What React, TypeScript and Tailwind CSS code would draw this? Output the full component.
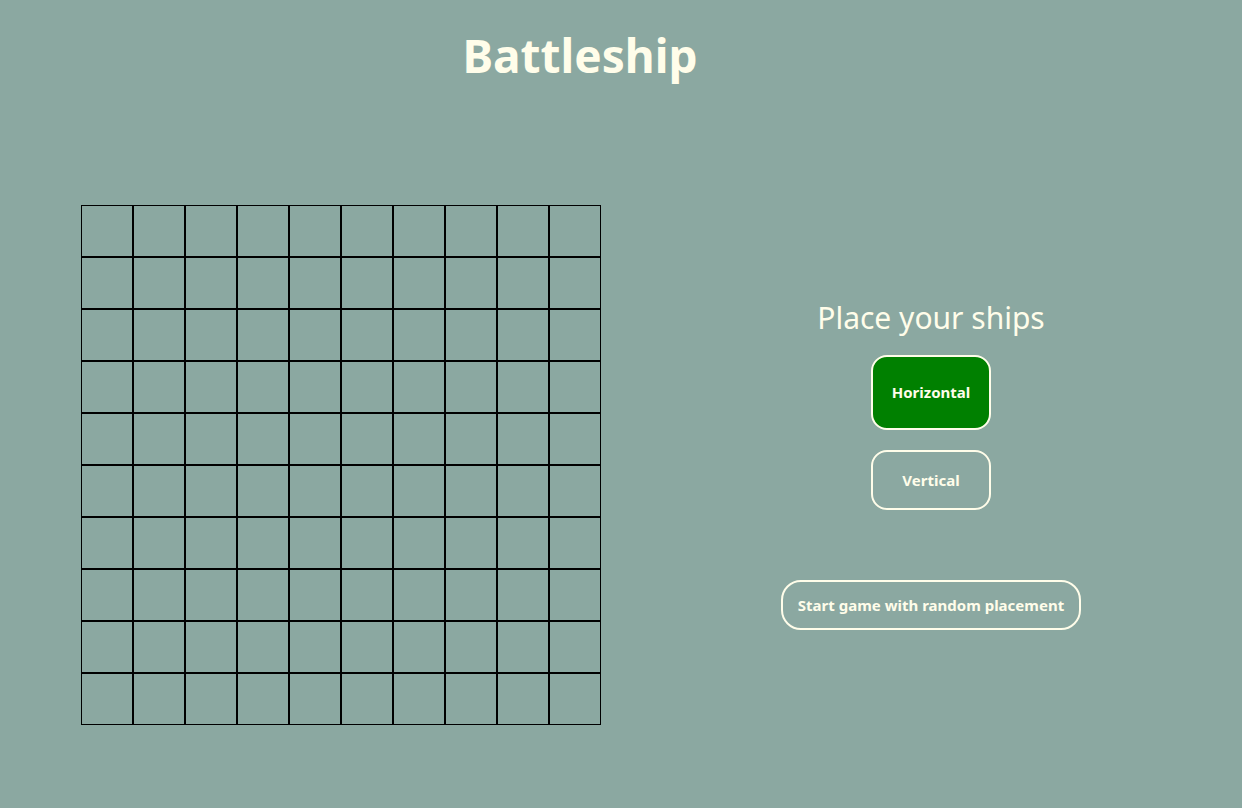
import React from "react";

export default function App() {
  const cells = Array.from({ length: 100 });
  return (
    <div
      className="w-[1242px] h-[808px] bg-[#8ba8a1] overflow-hidden text-[#fffdea]"
      style={{ fontFamily: '"Noto Sans", "Open Sans", sans-serif' }}
    >
      <h1 className="pt-[24px] pr-[82px] text-center text-[46px] font-bold leading-[62px]">
        Battleship
      </h1>
      <div className="flex items-center pl-[81px] pt-[119px]">
        <div className="grid grid-cols-[repeat(10,52px)] w-[520px] h-[520px]">
          {cells.map((_, i) => (
            <div key={i} className="w-[52px] h-[52px] border border-black" />
          ))}
        </div>
        <div className="ml-[180px] w-[300px] flex flex-col items-center">
          <div className="text-[30px] leading-[36px]">Place your ships</div>
          <button className="mt-[19px] w-[120px] h-[75px] rounded-[16px] border-2 border-[#fffdea] bg-[#008000] text-[15px] font-bold">
            Horizontal
          </button>
          <button className="mt-[20px] w-[120px] h-[60px] rounded-[16px] border-2 border-[#fffdea] text-[15px] font-bold">
            Vertical
          </button>
          <button className="mt-[70px] w-[300px] h-[50px] rounded-[20px] border-2 border-[#fffdea] text-[15px] font-bold">
            Start game with random placement
          </button>
        </div>
      </div>
    </div>
  );
}
